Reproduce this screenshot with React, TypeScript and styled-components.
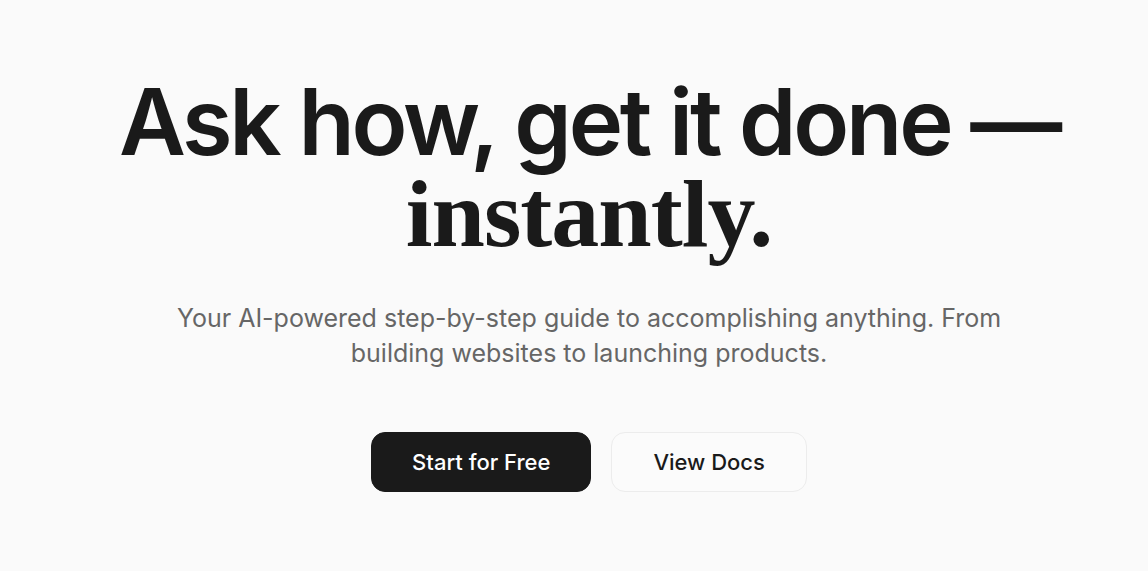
import styled, { createGlobalStyle } from "styled-components";

const GlobalStyle = createGlobalStyle`
  html, body {
    margin: 0;
    padding: 0;
    background: #fafafa;
  }
  body {
    font-family: "Inter", "Liberation Sans", sans-serif;
    color: #1a1a1a;
  }
`;

function App() {
  return (
    <>
      <GlobalStyle />
      <Hero>
        <Title>
          <Line>Ask how, get it done —</Line>
          <SerifLine>instantly.</SerifLine>
        </Title>
        <Subtitle>
          Your AI-powered step-by-step guide to accomplishing anything. From
          building websites to launching products.
        </Subtitle>
        <Actions>
          <Button $primary>Start for Free</Button>
          <Button>View Docs</Button>
        </Actions>
      </Hero>
    </>
  );
}

export default App;

const Hero = styled.main`
  display: flex;
  flex-direction: column;
  align-items: center;
  padding: 76px 0 0 30px;
  min-height: 571px;
  box-sizing: border-box;
`;

const Title = styled.h1`
  margin: 0;
  display: flex;
  flex-direction: column;
  align-items: center;
  text-align: center;
  line-height: 92px;
`;

const Line = styled.span`
  font-family: "Inter", "Liberation Sans", sans-serif;
  font-size: 92px;
  font-weight: 600;
  letter-spacing: -0.035em;
  color: #1a1a1a;
`;

const SerifLine = styled.span`
  font-family: "Liberation Serif", "DejaVu Serif", serif;
  font-size: 96px;
  font-weight: 700;
  letter-spacing: -0.01em;
  color: #1a1a1a;
`;

const Subtitle = styled.p`
  margin: 41px 0 0;
  max-width: 830px;
  text-align: center;
  font-size: 25px;
  line-height: 35px;
  color: #666666;
`;

const Actions = styled.div`
  display: flex;
  gap: 20px;
  margin-top: 61px;
`;

const Button = styled.button<{ $primary?: boolean }>`
  height: 60px;
  padding: 0 ${(p) => (p.$primary ? "40px" : "41px")};
  border-radius: 14px;
  font-family: "Inter", "Liberation Sans", sans-serif;
  font-size: 22px;
  font-weight: 500;
  cursor: pointer;
  background: ${(p) => (p.$primary ? "#1a1a1a" : "#fbfbfb")};
  color: ${(p) => (p.$primary ? "#ffffff" : "#1a1a1a")};
  border: 1px solid ${(p) => (p.$primary ? "#1a1a1a" : "#ececec")};
`;
